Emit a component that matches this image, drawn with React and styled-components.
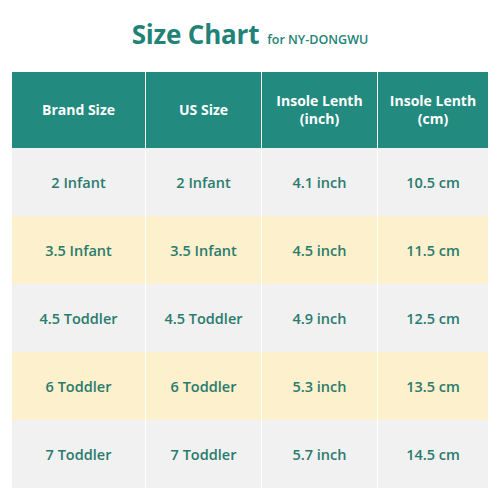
import React from "react";
import styled, { createGlobalStyle } from "styled-components";

const Global = createGlobalStyle`
  html, body { margin: 0; padding: 0; background: #ffffff; }
  body { font-family: "Open Sans", "Noto Sans", sans-serif; }
`;

const Page = styled.div`
  width: 500px;
  height: 500px;
  box-sizing: border-box;
  padding: 16px 12px 0 12px;
  background: #ffffff;
`;

const TitleRow = styled.div`
  display: flex;
  justify-content: center;
  align-items: baseline;
  gap: 8px;
  height: 56px;
  color: #238277;
`;

const Title = styled.h1`
  margin: 0;
  font-size: 26px;
  line-height: 36px;
  font-weight: 700;
  letter-spacing: -0.2px;
`;

const Sub = styled.span`
  font-size: 12.5px;
  font-weight: 600;
`;

const Table = styled.div`
  display: grid;
  grid-template-columns: 133px 115px 115px 110px;
  grid-auto-rows: 68px;
  grid-template-rows: 76px;
  column-gap: 1px;
  width: 476px;
`;

const HeadCell = styled.div`
  background: #228a7f;
  color: #ffffff;
  font-weight: 700;
  font-size: 14px;
  line-height: 18px;
  display: flex;
  align-items: center;
  justify-content: center;
  text-align: center;
`;

const Cell = styled.div`
  background: ${(p) => (p.$alt ? "#fdf0cc" : "#f1f1f1")};
  color: #2a7b6d;
  font-weight: 600;
  font-size: 14.5px;
  display: flex;
  align-items: center;
  justify-content: center;
`;

const headers = [
  ["Brand Size"],
  ["US Size"],
  ["Insole Lenth", "(inch)"],
  ["Insole Lenth", "(cm)"],
];

const rows = [
  ["2 Infant", "2 Infant", "4.1 inch", "10.5 cm"],
  ["3.5 Infant", "3.5 Infant", "4.5 inch", "11.5 cm"],
  ["4.5 Toddler", "4.5 Toddler", "4.9 inch", "12.5 cm"],
  ["6 Toddler", "6 Toddler", "5.3 inch", "13.5 cm"],
  ["7 Toddler", "7 Toddler", "5.7 inch", "14.5 cm"],
];

export default function App() {
  return (
    <>
      <Global />
      <Page>
        <TitleRow>
          <Title>Size Chart</Title>
          <Sub>for NY-DONGWU</Sub>
        </TitleRow>
        <Table>
          {headers.map((h, i) => (
            <HeadCell key={i}>
              <div>
                {h.map((l, j) => (
                  <div key={j}>{l}</div>
                ))}
              </div>
            </HeadCell>
          ))}
          {rows.map((r, i) =>
            r.map((c, j) => (
              <Cell key={`${i}-${j}`} $alt={i % 2 === 1}>
                {c}
              </Cell>
            ))
          )}
        </Table>
      </Page>
    </>
  );
}
